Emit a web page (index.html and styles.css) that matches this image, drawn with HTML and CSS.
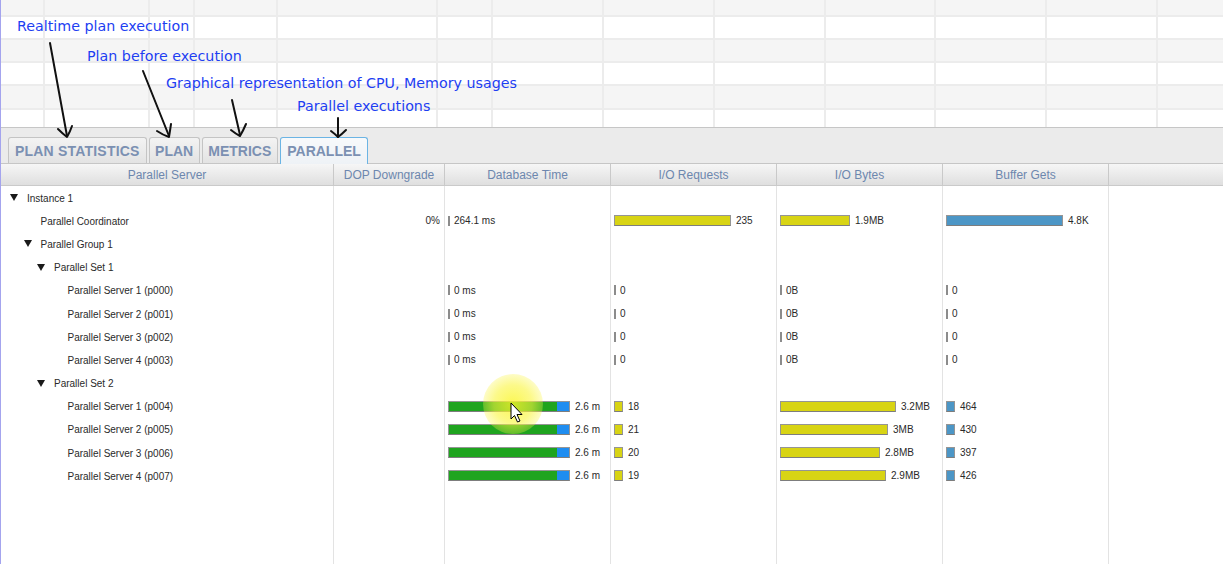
FILE: index.html
```html
<!DOCTYPE html>
<html>
<head>
<meta charset="utf-8">
<link rel="stylesheet" href="styles.css">
</head>
<body>
<div class="app">
  <div class="sheet">
    <div class="srow alt h17"><span></span><span></span><span></span><span></span><span></span><span></span><span></span><span></span><span></span><span></span><span></span><span></span><span></span></div>
    <div class="srow h23"><span></span><span></span><span></span><span></span><span></span><span></span><span></span><span></span><span></span><span></span><span></span><span></span><span></span></div>
    <div class="srow alt h23"><span></span><span></span><span></span><span></span><span></span><span></span><span></span><span></span><span></span><span></span><span></span><span></span><span></span></div>
    <div class="srow h23"><span></span><span></span><span></span><span></span><span></span><span></span><span></span><span></span><span></span><span></span><span></span><span></span><span></span></div>
    <div class="srow alt h24"><span></span><span></span><span></span><span></span><span></span><span></span><span></span><span></span><span></span><span></span><span></span><span></span><span></span></div>
    <div class="srow hlast"><span></span><span></span><span></span><span></span><span></span><span></span><span></span><span></span><span></span><span></span><span></span><span></span><span></span></div>
  </div>

  <div class="tabs">
    <div class="tab wide">PLAN STATISTICS</div>
    <div class="tab">PLAN</div>
    <div class="tab">METRICS</div>
    <div class="tab active">PARALLEL</div>
  </div>

  <div class="grid">
    <div class="thead">
      <div class="th">Parallel Server</div>
      <div class="th">DOP Downgrade</div>
      <div class="th">Database Time</div>
      <div class="th">I/O Requests</div>
      <div class="th">I/O Bytes</div>
      <div class="th">Buffer Gets</div>
      <div class="th"></div>
    </div>
    <div class="tbody">
      <div class="tr">
        <div class="td name l0"><i class="tog"></i>Instance 1</div>
        <div class="td"></div><div class="td m"></div><div class="td m"></div><div class="td m"></div><div class="td m"></div><div class="td"></div>
      </div>
      <div class="tr">
        <div class="td name l1"><i class="sp"></i>Parallel Coordinator</div>
        <div class="td dop">0%</div>
        <div class="td m"><i class="tick"></i>264.1 ms</div>
        <div class="td m"><i class="bar y" style="width:117px"></i>235</div>
        <div class="td m"><i class="bar y" style="width:70px"></i>1.9MB</div>
        <div class="td m"><i class="bar b" style="width:117px"></i>4.8K</div>
        <div class="td"></div>
      </div>
      <div class="tr">
        <div class="td name l1"><i class="tog"></i>Parallel Group 1</div>
        <div class="td"></div><div class="td m"></div><div class="td m"></div><div class="td m"></div><div class="td m"></div><div class="td"></div>
      </div>
      <div class="tr">
        <div class="td name l2"><i class="tog"></i>Parallel Set 1</div>
        <div class="td"></div><div class="td m"></div><div class="td m"></div><div class="td m"></div><div class="td m"></div><div class="td"></div>
      </div>
      <div class="tr">
        <div class="td name l3"><i class="sp"></i>Parallel Server 1 (p000)</div>
        <div class="td"></div>
        <div class="td m"><i class="tick"></i>0 ms</div>
        <div class="td m"><i class="tick"></i>0</div>
        <div class="td m"><i class="tick"></i>0B</div>
        <div class="td m"><i class="tick"></i>0</div>
        <div class="td"></div>
      </div>
      <div class="tr">
        <div class="td name l3"><i class="sp"></i>Parallel Server 2 (p001)</div>
        <div class="td"></div>
        <div class="td m"><i class="tick"></i>0 ms</div>
        <div class="td m"><i class="tick"></i>0</div>
        <div class="td m"><i class="tick"></i>0B</div>
        <div class="td m"><i class="tick"></i>0</div>
        <div class="td"></div>
      </div>
      <div class="tr">
        <div class="td name l3"><i class="sp"></i>Parallel Server 3 (p002)</div>
        <div class="td"></div>
        <div class="td m"><i class="tick"></i>0 ms</div>
        <div class="td m"><i class="tick"></i>0</div>
        <div class="td m"><i class="tick"></i>0B</div>
        <div class="td m"><i class="tick"></i>0</div>
        <div class="td"></div>
      </div>
      <div class="tr">
        <div class="td name l3"><i class="sp"></i>Parallel Server 4 (p003)</div>
        <div class="td"></div>
        <div class="td m"><i class="tick"></i>0 ms</div>
        <div class="td m"><i class="tick"></i>0</div>
        <div class="td m"><i class="tick"></i>0B</div>
        <div class="td m"><i class="tick"></i>0</div>
        <div class="td"></div>
      </div>
      <div class="tr">
        <div class="td name l2"><i class="tog"></i>Parallel Set 2</div>
        <div class="td"></div><div class="td m"></div><div class="td m"></div><div class="td m"></div><div class="td m"></div><div class="td"></div>
      </div>
      <div class="tr">
        <div class="td name l3"><i class="sp"></i>Parallel Server 1 (p004)</div>
        <div class="td"></div>
        <div class="td m"><i class="bar db"><i class="g"></i><i class="u"></i></i>2.6 m</div>
        <div class="td m"><i class="bar y sq"></i>18</div>
        <div class="td m"><i class="bar y" style="width:116px"></i>3.2MB</div>
        <div class="td m"><i class="bar b sq"></i>464</div>
        <div class="td"></div>
      </div>
      <div class="tr">
        <div class="td name l3"><i class="sp"></i>Parallel Server 2 (p005)</div>
        <div class="td"></div>
        <div class="td m"><i class="bar db"><i class="g"></i><i class="u"></i></i>2.6 m</div>
        <div class="td m"><i class="bar y sq"></i>21</div>
        <div class="td m"><i class="bar y" style="width:108px"></i>3MB</div>
        <div class="td m"><i class="bar b sq"></i>430</div>
        <div class="td"></div>
      </div>
      <div class="tr">
        <div class="td name l3"><i class="sp"></i>Parallel Server 3 (p006)</div>
        <div class="td"></div>
        <div class="td m"><i class="bar db"><i class="g"></i><i class="u"></i></i>2.6 m</div>
        <div class="td m"><i class="bar y sq"></i>20</div>
        <div class="td m"><i class="bar y" style="width:100px"></i>2.8MB</div>
        <div class="td m"><i class="bar b sq"></i>397</div>
        <div class="td"></div>
      </div>
      <div class="tr">
        <div class="td name l3"><i class="sp"></i>Parallel Server 4 (p007)</div>
        <div class="td"></div>
        <div class="td m"><i class="bar db"><i class="g"></i><i class="u"></i></i>2.6 m</div>
        <div class="td m"><i class="bar y sq"></i>19</div>
        <div class="td m"><i class="bar y" style="width:106px"></i>2.9MB</div>
        <div class="td m"><i class="bar b sq"></i>426</div>
        <div class="td"></div>
      </div>
      <div class="tr fill">
        <div class="td"></div><div class="td"></div><div class="td"></div><div class="td"></div><div class="td"></div><div class="td"></div><div class="td"></div>
      </div>
    </div>
  </div>

  <div class="note n1">Realtime plan execution</div>
  <div class="note n2">Plan before execution</div>
  <div class="note n3">Graphical representation of CPU, Memory usages</div>
  <div class="note n4">Parallel executions</div>

  <svg class="arrows" width="400" height="145" viewBox="0 0 400 145">
    <g fill="none" stroke="#111" stroke-width="2" stroke-linecap="round" stroke-linejoin="round">
      <path d="M50 43 L67 136"/>
      <path d="M58 129 Q63 134 67 137 Q70 132 72 126"/>
      <path d="M143 71 L169 136"/>
      <path d="M157 131 Q163 135 169 137 Q170 131 171 124"/>
      <path d="M232 100 L240 135"/>
      <path d="M231 130 Q236 134 240 136 Q243 131 246 124"/>
      <path d="M338 118 L338 137"/>
      <path d="M331 131 Q335 134 338 137 Q342 134 346 130"/>
    </g>
  </svg>

  <div class="spot"></div>
  <svg class="cursor" width="14" height="22" viewBox="0 0 14 22">
    <path d="M1 1 L1 17 L4.5 13.5 L7.5 20 L10 19 L7 12.5 L12 12.5 Z" fill="#fff" stroke="#000" stroke-width="1" stroke-linejoin="round"/>
  </svg>
</div>
</body>
</html>
```

FILE: styles.css
```css
* { box-sizing: border-box; }
html, body { margin: 0; padding: 0; }
body {
  width: 1223px;
  height: 564px;
  overflow: hidden;
  background: #fff;
  font-family: "Liberation Sans", Arial, sans-serif;
}
.app {
  position: relative;
  height: 564px;
  border-left: 1px solid #a4a4ee;
  display: flex;
  flex-direction: column;
}

/* spreadsheet background */
.sheet {
  flex: none;
  border-bottom: 1px solid #c6c6c6;
}
.srow {
  display: grid;
  grid-template-columns: 44px 105px 45px 83px 160px 55px 111px 111px 111px 110px 111px 111px 65px;
  background: #fff;
  border-bottom: 2px solid #ececec;
}
.srow.alt { background: #f5f5f5; }
.srow span { border-right: 2px solid #ececec; }
.srow span:last-child { border-right: none; }
.h17 { height: 17px; }
.h23 { height: 23px; }
.h24 { height: 24px; }
.hlast { height: 17px; border-bottom: none; }

/* tabs */
.tabs {
  flex: none;
  height: 36px;
  background: #ebebeb;
  padding: 0 0 0 7px;
  display: flex;
  align-items: flex-end;
  gap: 2px;
  border-bottom: 1px solid #c6c6c6;
}
.tab {
  height: 26px;
  padding: 0 5.5px;
  border: 1px solid #c4c4c4;
  border-bottom: none;
  border-radius: 3px 3px 0 0;
  background: linear-gradient(#f3f3f3, #e3e3e3);
  color: #7b90b2;
  font-weight: bold;
  font-size: 14px;
  line-height: 26px;
  white-space: nowrap;
}
.tab.wide { padding: 0 6px; letter-spacing: 0.2px; }
.tab.active {
  height: 27px;
  margin-bottom: -1px;
  padding: 0 6.5px;
  border: 1px solid #6bb4e4;
  border-bottom: none;
  background: linear-gradient(#f7f9fb, #eef2f6);
  position: relative;
  line-height: 26px;
}

/* grid */
.grid {
  flex: 1;
  display: flex;
  flex-direction: column;
}
.thead, .tr {
  display: grid;
  grid-template-columns: 333px 111px 166px 166px 166px 166px 114px;
}
.thead {
  height: 22px;
  background: linear-gradient(#f6f6f6, #dfdfdf);
  border-bottom: 1px solid #cacaca;
}
.th {
  border-right: 1px solid #c9c9c9;
  text-align: center;
  font-size: 12px;
  line-height: 22px;
  color: #6d87ae;
  white-space: nowrap;
}
.th:last-child { border-right: none; }

.tbody {
  flex: 1;
  display: flex;
  flex-direction: column;
}
.tr { height: 23.2px; }
.tr.fill { flex: 1; }
.td {
  border-right: 1px solid #e3e3e3;
  display: flex;
  align-items: center;
  font-size: 10px;
  color: #2a2a2a;
  white-space: nowrap;
}
.td:last-child { border-right: none; }

.name { padding-top: 1px; }
.l0 { padding-left: 9px; }
.l1 { padding-left: 22.5px; }
.l2 { padding-left: 36px; }
.l3 { padding-left: 49.5px; }
.tog {
  width: 17px;
  height: 8px;
  flex: none;
  position: relative;
}
.tog::before {
  content: "";
  position: absolute;
  left: 0;
  top: 0;
  border-left: 4px solid transparent;
  border-right: 4px solid transparent;
  border-top: 7px solid #1a1a1a;
}
.sp { width: 17px; flex: none; }

.dop { justify-content: flex-end; padding-right: 4px; }
.m { padding-left: 3px; }

.tick {
  width: 2px;
  height: 10px;
  background: #8c8c8c;
  margin-right: 4px;
  flex: none;
}
.bar {
  display: flex;
  height: 11px;
  border: 1px solid #959595;
  border-bottom-color: #7d7d7d;
  margin-right: 5px;
  flex: none;
}
.bar.y { background: #d8d414; }
.bar.b { background: #4c96c6; }
.bar.sq { width: 9px; }
.bar.db { width: 122px; }
.bar.db .g { flex: 1; background: #1fa41f; }
.bar.db .u { width: 12px; background: #1f8df0; }

/* annotations */
.note {
  position: absolute;
  font-family: "DejaVu Sans", sans-serif;
  font-size: 14.25px;
  line-height: 16px;
  color: #1d3ef2;
  white-space: nowrap;
}
.n1 { left: 16px; top: 18px; }
.n2 { left: 86px; top: 48px; }
.n3 { left: 165px; top: 75px; }
.n4 { left: 296px; top: 98px; }

.arrows {
  position: absolute;
  left: -1px;
  top: 0;
}

.spot {
  position: absolute;
  left: 482px;
  top: 374px;
  width: 60px;
  height: 60px;
  border-radius: 50%;
  background: radial-gradient(circle, rgba(250, 245, 40, 0.8) 0%, rgba(250, 245, 60, 0.6) 45%, rgba(250, 245, 90, 0.2) 80%, rgba(255, 255, 120, 0) 100%);
}
.cursor {
  position: absolute;
  left: 509px;
  top: 402px;
}
```
